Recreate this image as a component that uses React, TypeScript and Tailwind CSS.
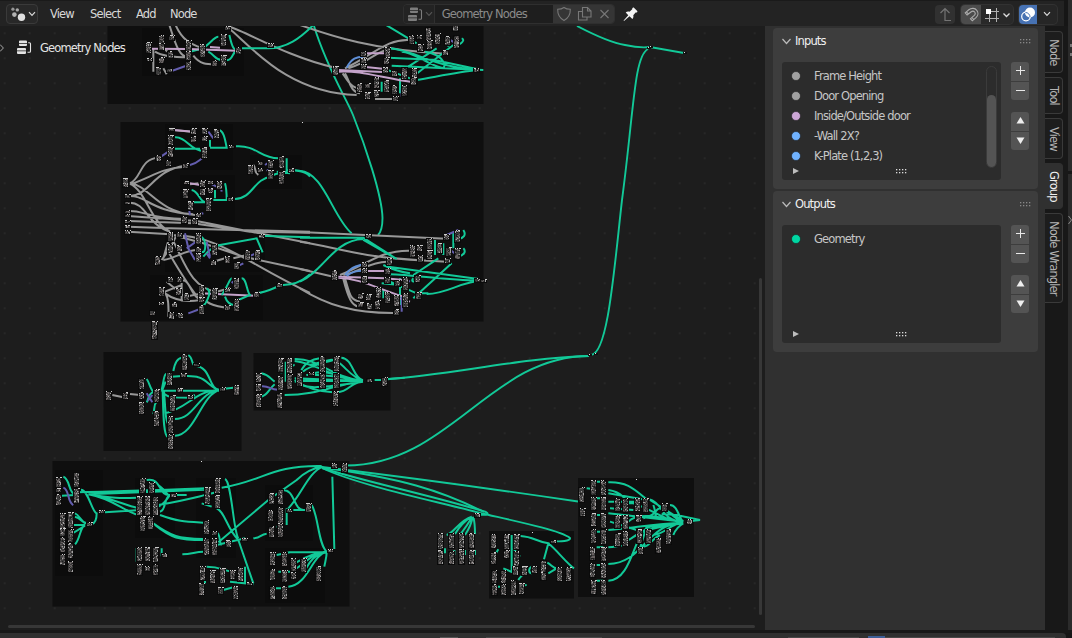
import React from 'react';

type Tone = 'geo' | 'val' | 'vec' | 'mat' | 'bool';
const TONES: Record<Tone, string> = {
  geo: '#12c998',
  val: '#989898',
  vec: '#635dae',
  mat: '#c3a2c9',
  bool: '#5f8fd6',
};

type ClusterData = {
  x: number;
  y: number;
  links: [Tone, string][];
  // each node: centre x, top y, height
  nodes: string;
};

// Clusters are stored on a grid three times finer than the screen.
const CLUSTERS: ClusterData[] = [
  {
    x: 100,
    y: 25,
    links: [
      ['val', 'M208 0C225 50 235 95 265 97M225 -4C245 45 275 60 305 68M390 6C440 20 560 95 705 128M385 8C450 60 560 205 770 210M600 0C700 35 820 75 1035 86M160 70V140M165 80C180 90 210 97 265 97M280 92C300 118 320 118 345 118M190 70L215 90M735 130C820 90 860 40 930 45M745 130C800 115 830 80 860 75M735 145C750 170 750 200 780 205M728 145C745 170 755 190 780 190M825 222H885M190 130L200 148'],
      ['geo', 'M300 75C330 60 340 35 355 35M325 80C345 90 345 105 365 105M388 30C395 60 400 80 415 72C395 80 400 110 375 105M420 70H505C560 70 600 40 640 0M850 -5L950 55M925 125L1010 70M945 150L1060 60M975 80C1040 90 1040 135 1025 128C985 120 940 80 905 80M870 70C960 80 1000 130 1150 135M865 98L1000 104L1130 132M875 122L1130 134M950 165C1010 155 1080 140 1130 136M850 130L930 160M1085 40C1100 45 1075 65 1062 60M1015 25V55M1045 35V65M270 80L310 70M845 170V200M900 160V205M1005 30V55'],
      ['mat', 'M155 71L265 72L410 77M330 66L360 68M715 135L865 142M715 140C780 135 850 160 940 172M790 85L855 85M790 125L855 132'],
      ['bool', 'M740 128C755 100 770 95 790 95'],
      ['vec', 'M215 138L265 120M360 45L380 60M1068 40V70M905 190V215M1050 45L1078 60'],
    ],
    nodes:
      '145,50,32 148,98,10 185,30,26 185,55,22 185,95,18 214,30,16 212,78,20 177,125,24 208,130,12 266,45,36 266,78,28 266,108,28 308,58,38 372,28,36 372,90,34 345,105,18 415,65,20 383,2,12 512,55,12 707,122,28 790,78,14 790,98,14 790,118,14 862,66,32 860,95,22 858,125,18 915,125,36 945,130,48 885,135,18 935,30,26 960,30,12 985,5,38 962,58,20 988,45,26 1013,25,34 1043,32,26 1070,30,40 1067,-2,20 1037,75,16 1130,128,12 778,175,28 803,175,16 804,200,20 830,155,34 830,195,22 860,165,36 885,180,26 913,180,34 886,214,14 940,155,24',
  },
  {
    x: 110,
    y: 115,
    links: [
      ['val', 'M60 205C95 190 90 130 145 128M60 208C120 190 150 160 225 155M60 243C120 240 130 165 225 152M60 203C120 215 140 290 255 300M60 206C110 230 120 320 180 350M55 243C110 240 120 290 250 298M55 263C110 260 110 330 180 350M55 288C100 285 110 310 225 312M55 303L260 318L600 385M55 318L250 325L420 350L600 353M55 335L180 340L600 350M55 350L180 358L280 385L400 425L600 468M190 45L245 50M180 360C330 360 400 440 600 534M200 360L180 400L155 435M160 430L180 360M160 435C200 430 220 405 265 405M170 400C190 440 240 520 270 555M185 370C220 430 240 520 320 530C340 525 350 522 360 520M290 560C310 575 330 575 350 578M160 530C180 540 175 600 175 605M165 530L215 510M165 535C200 560 240 560 270 555M170 500L225 545L280 535M205 500C240 480 240 540 265 550M430 150C440 160 430 170 445 180M310 440L345 430M370 430L410 420M215 490V560M200 600L215 605M265 205L240 208'],
      ['mat', 'M270 535L435 542M240 205L270 210M190 45L250 50'],
      ['geo', 'M195 67C230 65 240 108 285 108M195 101H270M300 98H350C345 70 340 45 325 45M300 95V75M378 94C440 90 450 130 505 130M530 130V170C520 175 500 175 490 180M530 165C570 165 590 170 600 185M375 252C430 250 430 190 485 185M245 225C270 230 265 265 300 265M310 255H350C350 225 348 215 345 205M315 250V225M250 262L290 262M275 410C290 420 290 365 270 365M280 425C300 400 315 395 330 390L440 370L458 412M445 362L600 367M290 520C310 530 285 575 270 580M335 540C350 520 360 490 365 490M345 545C350 560 360 570 375 570M395 490C410 490 410 530 420 540L385 555M440 535C480 530 500 512 520 510C570 510 590 485 600 478M500 170L540 175'],
      ['vec', 'M145 130L175 110M240 150C265 145 270 130 285 125M225 355L235 400L255 435M230 400L265 375M290 380L300 425M295 50L310 70M330 200L335 230M235 270L240 300M235 595L270 582M365 500L385 515M380 455L400 445M415 425L450 410M465 150L480 140M470 165L490 175M300 205L320 215M280 295L260 300M290 415L300 430'],
    ],
    nodes:
      '185,40,10 183,60,30 183,95,30 175,135,18 147,120,18 250,38,18 250,64,18 285,38,18 285,62,16 320,42,26 285,95,34 365,90,10 228,145,14 47,190,28 54,238,12 54,258,10 54,284,10 54,298,10 54,314,10 54,330,10 54,346,12 422,150,26 452,138,12 452,160,12 483,134,24 483,165,26 515,122,36 515,168,38 545,160,12 230,198,8 228,222,28 278,195,22 278,220,20 303,195,12 303,220,14 330,198,24 296,248,38 362,246,12 242,258,26 225,302,22 255,308,18 265,294,12 183,350,28 183,388,26 210,350,16 210,390,18 265,355,32 265,395,14 265,415,28 314,388,34 310,435,14 352,422,20 380,440,20 413,405,30 442,405,30 455,358,12 143,424,28 183,485,16 210,487,16 156,516,28 205,518,22 230,535,22 195,560,16 155,562,10 275,510,38 276,545,14 275,570,28 315,520,36 352,518,12 380,488,34 352,570,14 380,552,36 185,590,20 212,594,14 440,530,14 508,505,12 128,585,14 135,618,54',
  },
  {
    x: 300,
    y: 115,
    links: [
      ['val', 'M0 351L440 371M0 380C100 395 180 425 330 434L440 440M0 462L100 485M0 520C80 570 160 595 285 594M120 480C200 450 240 405 330 407M130 480C180 470 210 440 260 440M135 490C150 540 150 555 180 560M130 492C145 550 155 570 175 575M285 430L350 435'],
      ['geo', 'M0 168C70 170 100 310 155 355M0 368H190L290 432M0 500C70 470 100 375 190 372M190 375L290 432M340 480L415 430M340 550L455 445M490 345C500 360 490 370 475 372M490 400C500 410 490 422 475 425M265 455L535 492M270 478C340 480 440 495 535 497M380 537C440 538 480 500 550 496M270 500L350 535H385M340 490C330 500 345 505 350 490M405 375V420M430 385V420M250 525V550M300 490V570M460 400V350M250 450C270 460 290 470 330 475M245 505L300 510'],
      ['mat', 'M115 485L255 490L310 495M115 488C180 490 230 520 310 545M195 468L255 468M290 548L330 560'],
      ['bool', 'M135 480C155 455 165 455 190 448M140 483C160 468 170 468 190 467'],
      ['vec', 'M305 545V590M440 360L475 345M465 350V375M465 405V430M310 490L330 500M445 400L470 420'],
    ],
    nodes:
      '104,464,30 193,440,16 193,460,14 193,482,20 268,430,20 263,458,18 263,485,18 205,358,12 338,390,36 360,390,18 388,370,34 390,405,28 362,420,20 418,385,30 447,395,28 440,358,18 472,345,36 472,398,34 443,430,14 318,485,38 292,495,18 352,480,22 355,532,20 182,535,18 205,537,18 182,560,14 208,565,18 235,515,32 233,555,26 263,530,34 290,540,32 318,535,42 290,582,18 534,490,12 551,492,8',
  },
  {
    x: 95,
    y: 345,
    links: [
      ['val', 'M52 150L92 158M105 147L135 150'],
      ['geo', 'M155 102C165 115 165 135 178 142M155 172C160 165 160 145 175 142M175 208C180 190 175 180 185 170M200 135C210 90 205 85 225 85M235 78C240 50 250 38 262 38M280 30C295 40 290 62 300 62C350 65 340 135 375 135M230 95C260 92 300 92 310 97C340 105 345 130 375 135M200 137H375M205 145C220 158 230 158 285 158M375 135C300 135 280 190 210 205M375 135C310 140 300 222 240 222M375 135C320 145 300 272 240 272M203 140C205 200 205 272 218 275M207 140C212 190 210 220 218 235M200 140L212 110M375 133L415 128M290 155L300 150'],
      ['vec', 'M155 145L172 172M158 168L172 150'],
    ],
    nodes:
      '41,137,28 92,140,20 141,98,34 139,140,20 140,170,36 184,132,40 185,198,46 268,26,48 225,82,38 305,55,10 267,84,12 254,130,12 288,150,12 234,150,48 227,212,52 227,268,46 383,126,12 426,120,30',
  },
  {
    x: 253,
    y: 345,
    links: [
      ['geo', 'M25 85C50 90 50 100 65 110M25 155C45 150 45 135 65 118M85 85V50M98 110V50M125 42C200 40 230 95 330 108M125 48C210 60 240 105 330 108M125 100L330 108M125 110C200 100 250 110 330 110M95 150C200 150 250 115 330 110M145 75C160 50 180 42 200 40M150 80C170 60 230 50 240 45M160 90C200 85 260 95 330 108M230 45C260 35 290 100 330 106M265 38C300 40 300 100 330 106M125 105C160 130 200 140 240 142C290 145 290 110 330 110M145 120C170 130 190 130 330 110M180 85C240 70 270 110 330 108M145 108H330M365 105H385M405 103C420 100 440 100 455 98M100 90C110 70 115 60 125 60M170 60L230 45'],
      ['vec', 'M25 124C50 122 50 134 75 134'],
    ],
    nodes:
      '16,84,28 16,118,20 16,148,40 83,40,42 83,92,42 81,145,44 110,38,46 110,88,46 140,80,42 208,32,48 208,85,44 250,32,46 250,84,44 248,138,44 175,82,8 350,98,12 395,95,28',
  },
  {
    x: 45,
    y: 455,
    links: [
      ['geo', 'M55 65C75 70 70 115 90 118M50 122L90 120M108 104C130 105 140 170 155 175C155 190 150 205 140 208M92 112C200 110 350 105 480 100M130 118L480 104M130 118C200 130 230 130 275 128M130 118C200 130 240 150 275 158M130 118C200 130 240 170 280 180M180 172L275 166M530 98C650 80 680 30 830 33M340 150C450 130 520 110 480 118M345 180C400 200 420 200 475 203M325 205C380 245 400 250 475 252M330 210C380 250 400 255 475 255M305 75C350 65 340 125 375 120C365 135 350 150 340 155M345 170C365 165 355 130 375 120H425M340 90C355 100 360 110 370 120M412 298C440 298 450 290 475 290M540 72C560 80 565 230 580 250M515 160C540 170 545 220 580 255L625 385M520 262L670 135L755 75C780 50 800 40 830 35M515 270L600 250M505 232C530 225 520 265 530 270M625 250C650 248 645 238 665 236M710 105C750 100 745 165 775 165M745 165H790M730 160C770 120 790 50 835 35M800 150C820 180 820 270 845 290C845 310 840 320 838 335M862 65L868 282M730 292H845C800 300 790 330 780 345M845 290C800 290 770 340 735 350M845 290C800 300 790 390 730 395M845 290C790 295 760 320 750 325M725 160V210M700 350H735M690 400H715M695 300L735 292M695 215H715M90 175C105 180 105 200 125 205M90 185C110 190 110 205 125 205M85 210L120 210C105 215 105 255 90 268M75 240L120 212M275 280V320M350 280V300L365 298M485 335C530 335 525 345 560 350M600 335V385H620M480 385V350M555 380L625 388M535 405L570 395M470 145L500 155M480 120L520 110'],
      ['vec', 'M55 98C75 105 65 140 85 150'],
    ],
    nodes:
      '41,65,30 41,98,12 41,118,34 94,52,44 94,98,46 52,175,46 52,220,24 54,245,46 54,298,34 78,172,48 78,222,40 78,265,44 78,318,34 170,166,10 133,200,12 293,70,44 319,80,34 283,122,56 307,122,56 331,122,56 293,182,46 318,182,40 385,115,12 285,276,42 309,276,42 333,276,44 285,328,34 308,332,14 333,328,34 360,294,12 488,95,52 518,68,46 518,120,40 484,195,42 484,248,50 508,248,50 508,228,12 551,255,22 600,250,8 473,332,42 502,345,38 470,385,36 533,338,46 527,395,22 562,345,28 587,335,42 572,392,40 613,380,10 680,115,32 708,102,46 678,165,32 708,155,50 680,213,34 708,205,42 735,162,10 790,145,28 683,292,40 683,342,34 683,392,38 718,292,42 718,345,36 718,392,40 745,308,38 745,352,22 775,308,42 822,332,46 858,282,10 870,25,16 898,25,28',
  },
  {
    x: 420,
    y: 460,
    links: [
      ['geo', 'M155 170C120 180 100 220 80 225M155 170C130 185 115 205 105 222M157 170C145 190 135 205 122 222M158 170C155 190 145 210 135 225M160 170C165 190 165 205 165 222M75 265V280M103 270V285M135 270V285M165 270V285M275 225V335M280 265L300 290M302 228C340 230 350 245 385 250L372 298M385 250C410 270 440 310 462 325M382 308C395 315 400 325 410 325M235 268L225 285M250 325L285 340M295 360C300 350 310 345 315 335M335 320C325 325 325 340 335 340M385 340L410 325M230 380H260M295 378L320 375'],
      ['geo', 'M500 85L525 88M530 65H550M530 115H550M530 165H550M530 215H550M530 262H550M530 315H550M530 362H550M565 67C620 65 640 85 680 118M565 100L680 120M565 90C600 95 605 108 615 115M565 125H650M565 160L790 185M565 210C640 205 700 190 790 188M565 262C590 262 590 255 605 258M565 312C670 310 680 190 790 188M565 362C640 360 640 210 690 200L790 190M625 130L640 130C700 150 740 185 790 187M690 118C730 130 720 180 790 186M750 135C770 135 775 165 785 180M740 155C760 165 770 182 790 186M700 225C740 220 750 190 790 190M760 225C765 210 780 195 790 190M625 185C650 160 700 165 790 187M625 240C650 230 640 210 790 190M670 175C720 160 700 150 720 145M690 120L790 183M680 200L655 280M700 135C710 160 700 170 720 178M815 183L840 180L770 165L725 162M670 260C690 260 690 240 720 225M570 145L640 150M570 185L650 210'],
    ],
    nodes:
      '61,218,48 61,270,42 95,220,44 95,272,40 125,220,44 125,268,44 155,220,44 155,270,42 172,160,12 221,222,42 221,275,36 260,222,46 260,270,24 289,222,46 289,272,44 400,240,10 224,330,40 250,330,38 224,372,34 250,372,34 288,318,26 314,318,26 343,318,22 370,300,36 370,335,24 281,360,44 306,370,34 418,320,42 446,320,42 486,82,44 488,145,24 521,60,44 521,112,40 521,158,40 521,208,42 517,262,40 519,310,42 521,360,42 551,60,46 551,112,40 551,160,46 551,208,46 551,262,42 551,310,46 551,360,44 593,115,40 616,115,42 593,165,40 616,165,42 593,218,38 616,212,46 653,115,40 677,115,42 655,165,22 659,208,42 685,208,42 662,262,22 715,235,44 745,208,44 735,130,24 808,178,14',
  },
];

const FRAMES = [
  [107.5, 20, 376, 84],
  [120.5, 122, 363, 199.5],
  [103.5, 352, 138, 99],
  [253.5, 353, 137, 57.5],
  [52.5, 461, 297, 145.5],
  [489, 531, 85, 67.5],
  [578, 478, 116, 119],
];

const SUBFRAMES = [
  [142, 28, 102, 48],
  [165, 124, 68, 46],
  [250, 155, 52, 34],
  [180, 175, 55, 50],
  [150, 275, 113, 45],
  [165, 230, 100, 42],
  [55, 470, 48, 106],
  [135, 478, 40, 60],
  [196, 478, 40, 80],
  [265, 485, 48, 56],
  [265, 548, 60, 55],
];

const TRUNKS = [
  'M314 26C327 68 345 96 353 115C365 145 382 195 382.5 218C382.5 227 381 232 378 235',
  'M577 26C598 37 612 43 625 45C634 47 642 48 650 47L684 53',
  'M648 49C634 56 634 110 622 200C614 270 608 354 591 355',
  'M589 356C520 358 450 375 388 379',
  'M589 356C490 356 450 465 346 465.5',
  'M322 467C380 474 500 490 578 501.5',
  'M322 468C370 483 430 495 486 512C490 514 486 516 478 514',
  'M322 468C360 486 440 502 480 513C510 520 560 530 570 538C571 541 560 542 553 541',
  'M324 468C400 478 440 490 484 512',
];

const GridDots = () => (
  <pattern id="dots" x="3.7" y="7.3" width="25" height="25" patternUnits="userSpaceOnUse">
    <rect width="2" height="2" fill="#272727" />
  </pattern>
);

const snap = (v: number) => Math.round(v / 3) * 3;

// Stable 0..1 value for a grid cell, so every node keeps its own texture.
const cell = (a: number, b: number) => {
  const v = Math.sin(a * 12.9898 + b * 78.233) * 43758.5453;
  return v - Math.floor(v);
};

const NodeBox = ({ x, y, h }: { x: number; y: number; h: number }) => {
  const left = snap(x - 8);
  const top = snap(y);
  const height = snap(h);
  let bright = '';
  let soft = '';
  let dark = '';
  for (let r = 3; r < height; r += 3) {
    for (let c = 0; c < 5; c += 1) {
      const v = cell(left + c * 7, top + r);
      const px = `M${left + c * 3} ${top + r + 1.5}h3`;
      const limit = c === 4 ? 0.3 : c === 0 ? 0.1 : 0.06;
      if (v < limit) bright += px;
      else if (v < limit + (c === 0 || c === 4 ? 0.15 : 0.34)) soft += px;
      else if (v > 0.85) dark += px;
    }
  }
  let header = '';
  for (let c = 0; c < 6; c += 1) {
    if (cell(left + c, top * 3) < 0.44) header += `M${left + c * 3} ${top + 1.5}h3`;
  }
  return (
    <g strokeWidth="3">
      <rect x={left - 3} y={top} width="21" height={height + 3} fill="#0a0a0a" />
      <rect x={left} y={top + 3} width="15" height={height - 3} fill="#3c3c3c" />
      <path d={dark} stroke="#1e1e1e" />
      <path d={soft} stroke="#696363" />
      <path d={bright} stroke="#a8a8a8" />
      <path d={header} stroke="#d4d4d4" />
    </g>
  );
};

const Cluster = ({ data }: { data: ClusterData }) => (
  <g transform={`translate(${data.x} ${data.y}) scale(0.33333)`}>
    {data.links.map(([tone, d], i) => (
      <path key={i} d={d} stroke={TONES[tone]} strokeWidth="6" fill="none" />
    ))}
    {data.nodes.split(' ').map((n, i) => {
      const [x, y, h] = n.split(',').map(Number);
      return <NodeBox key={i} x={x} y={y} h={h} />;
    })}
  </g>
);

const SMALL_NODES = [
  [302, 122], [201, 461], [636, 479], [532, 532], [650, 46], [684, 52], [589, 354], [595, 353], [648, 47],
];

const NodeCanvas = () => (
  <svg className="block h-[604px] w-[765px]" viewBox="0 26 765 604">
    <defs>
      <GridDots />
    </defs>
    <rect y="26" width="765" height="604" fill="#1d1d1d" />
    <rect y="26" width="757" height="597" fill="url(#dots)" />
    {FRAMES.map(([x, y, w, h]) => (
      <rect key={`${x}-${y}`} x={x} y={y} width={w} height={h} fill="#0f0f0f" />
    ))}
    {SUBFRAMES.map(([x, y, w, h]) => (
      <rect key={`${x}-${y}`} x={x} y={y} width={w} height={h} fill="#0c0c0c" />
    ))}
    {TRUNKS.map((d) => (
      <path key={d} d={d} stroke={TONES.geo} strokeWidth="1.9" fill="none" />
    ))}
    {CLUSTERS.map((c, i) => (
      <Cluster key={i} data={c} />
    ))}
    {SMALL_NODES.map(([x, y], i) => (
      <g key={i}>
        <rect x={x - 1} y={y} width="4" height="2" fill="#111" />
        <rect x={x} y={y} width="1" height="1" fill="#ddd" />
      </g>
    ))}
    <rect x="8" y="625" width="747" height="3" rx="1.5" fill="#373737" />
    <rect x="759" y="278" width="3" height="337" rx="1.5" fill="#373737" />
  </svg>
);

const Chevron = ({ className = '' }: { className?: string }) => (
  <svg className={`h-[6px] w-[8px] shrink-0 ${className}`} viewBox="0 0 8 6">
    <path d="M1 1.2L4 4.4L7 1.2" fill="none" stroke="currentColor" strokeWidth="1.2" />
  </svg>
);

const TreeIcon = ({ className = '' }: { className?: string }) => (
  <svg className={`h-[15px] w-[15px] shrink-0 ${className}`} viewBox="0 0 15 15">
    <path d="M3 .5h6a1 1 0 0 1 1 1v1.700H2V1.500a1 1 0 0 1 1-1zM2 4h8v.9a1 1 0 0 1-1 1H3a1 1 0 0 1-1-1zM1 8h7a1 1 0 0 1 1 1v1.400H0V9a1 1 0 0 1 1-1zM0 11.300h9v1.700a1 1 0 0 1-1 1H1a1 1 0 0 1-1-1z" fill="currentColor" />
    <path d="M11.200 2.700h1.300a1 1 0 0 1 1 1v7.500a1 1 0 0 1-1 1H10.500" fill="none" stroke="currentColor" strokeWidth="1.100" />
  </svg>
);

const EditorIcon = () => (
  <svg className="h-[15px] w-[15px] shrink-0" viewBox="0 0 15 15" fill="#e0e0e0">
    <circle cx="1.900" cy="2.200" r="1.600" opacity=".6" />
    <circle cx="6.300" cy="2.900" r="1.700" opacity=".7" />
    <circle cx="3.400" cy="7.600" r="2.300" opacity=".75" />
    <circle cx="10.500" cy="10.300" r="3.700" />
  </svg>
);

const TopBar = () => (
  <header className="flex h-[26px] w-[1064px] items-center border-t border-[#1a1a1a] bg-[#232323] pb-px pl-[6px] text-[#d8d8d8]">
    <div className="mt-[2px] flex h-[20px] w-[32px] items-center gap-[2px] rounded-[4px] border border-[#3a3a3a] bg-[#282828] pl-[4px]">
      <EditorIcon />
      <Chevron />
    </div>
    <nav className="mt-[2px] flex">
      <span className="ml-[12px] w-[40px]">View</span>
      <span className="w-[46px]">Select</span>
      <span className="w-[34px]">Add</span>
      <span className="w-[233px]">Node</span>
    </nav>
    <div className="mt-[2px] flex h-[20px] w-[212px] overflow-hidden rounded-[4px] border border-[#2f2f2f] text-[#8a8a8a]">
      <div className="flex w-[31px] items-center gap-[2px] border-r border-[#303030] bg-[#232323] pl-[4px] text-[#7d7d7d]">
        <TreeIcon />
        <Chevron className="text-[#555]" />
      </div>
      <div className="flex w-[119px] items-center bg-[#1e1e1e] pl-[7px]">Geometry Nodes</div>
      <div className="flex flex-1 items-center bg-[#353535]">
        <svg className="h-[18px] w-[61px]" viewBox="0 0 61 18" fill="none" stroke="#777" strokeWidth="1.100">
          <path d="M11 2.500C13 4 15 4.300 17.300 4.300C17.500 9.500 15.500 13 11 15.500C6.500 13 4.500 9.500 4.700 4.300C7 4.300 9 4 11 2.500Z" />
          <path d="M29.500 2.500h5l3.500 3.500v6h-8.500zM34.500 2.500v3.500h3.500M29.500 6.500h-4v8.500h8.500v-3" />
          <path d="M47.500 5l8 8M55.500 5l-8 8" />
        </svg>
      </div>
    </div>
    <svg className="ml-[8px] mt-[2px] h-[15px] w-[15px]" viewBox="0 0 15 15" fill="#f4f4f4">
      <path d="M9.300 1.200C9.800.3 10.600.3 11.200.9L14 3.700C14.700 4.400 14.500 5.200 13.600 5.500L12.600 5.600L10.300 8.200C10.700 9.600 10.300 11 9.400 12L6.500 9.300L1 14L.6 13.600L5.300 8.200L2.700 5.400C3.700 4.500 5.100 4.300 6.500 4.700L9.200 2.300Z" />
    </svg>
    <div className="ml-auto mr-[7px] mt-[2px] flex">
      <div className="mr-[6px] flex h-[19px] w-[20px] items-center justify-center rounded-[4px] bg-[#313131]">
        <svg className="h-[15px] w-[13px]" viewBox="0 0 13 15" fill="none" stroke="#747474" strokeWidth="1.200">
          <path d="M12 13.500H6V1.500M1.500 6L6 1.500L10.500 6" />
        </svg>
      </div>
      <div className="flex h-[19px] w-[52px] overflow-hidden rounded-[4px] bg-[#292929] ring-1 ring-[#323232]">
        <div className="flex w-[20px] items-center justify-center bg-[#4c4c4c]">
          <svg className="h-[15px] w-[15px]" viewBox="0 0 15 15" fill="none" stroke="#adadad" strokeWidth="1.100">
            <path d="M1.200 5.800L4.800 2.800C7.500.7 11 1 12.800 3.300C14.500 5.600 14.200 8.800 12 10.700L8.300 13.800L6.500 11.700L10 8.700C11.300 7.500 11.500 6 10.600 5C9.700 4 8.200 4 6.900 5L3.100 8ZM4.300 7L2.500 4.800M9.700 12.500L7.900 10.300" />
          </svg>
        </div>
        <svg className="h-[19px] w-[32px]" viewBox="0 0 32 19" fill="none" stroke="#b0b0b0" strokeWidth="1">
          <path d="M8.500 8v9M15.500 3v14M4 13.500h14M10 6.500h8" />
          <rect x="5" y="4" width="5" height="5" fill="#fff" stroke="none" />
          <path d="M22.500 8.500L25.500 11.500L28.500 8.500" stroke="#ddd" strokeWidth="1.300" />
        </svg>
      </div>
      <div className="ml-[6px] flex h-[19px] w-[38px] items-center overflow-hidden rounded-[4px] bg-[#262626] ring-1 ring-[#323232]">
        <svg className="h-[19px] w-[18px] shrink-0 bg-[#4772b3]" viewBox="0 0 18 19">
          <circle cx="11" cy="7.500" r="5" fill="#fff" />
          <circle cx="7" cy="11.500" r="4.300" fill="none" stroke="#fff" strokeWidth="1.200" />
          <path d="M6.500 7.500A4.500 4.500 0 0 1 11 12" fill="none" stroke="#4772b3" strokeWidth="1" />
        </svg>
        <Chevron className="ml-[6px]" />
      </div>
    </div>
  </header>
);

const Grip = ({ className = '' }: { className?: string }) => (
  <svg className={`h-[5px] w-[11px] ${className}`} viewBox="0 0 11 5" fill="currentColor">
    {[0, 3, 6, 9].map((x) => (
      <g key={x}>
        <rect x={x} width="1.300" height="1.300" />
        <rect x={x} y="3" width="1.300" height="1.300" />
      </g>
    ))}
  </svg>
);

const ButtonPair = ({ paths, solid }: { paths: string[]; solid?: boolean }) => (
  <div className="flex flex-col gap-px overflow-hidden rounded-[3px]">
    {paths.map((d) => (
      <button key={d} className="flex h-[18.500px] w-[18px] items-center justify-center bg-[#545454] pb-[1.500px]">
        <svg className="h-[11px] w-[11px]" viewBox="0 0 11 11">
          <path d={d} fill={solid ? '#eee' : 'none'} stroke={solid ? 'none' : '#e8e8e8'} strokeWidth="1" />
        </svg>
      </button>
    ))}
  </div>
);

type Socket = { name: string; dot: string };

const SocketPanel = ({ title, items, scroll }: { title: string; items: Socket[]; scroll?: boolean }) => (
  <section className="h-[161px] w-[265px] rounded-[4px] bg-[#3d3d3d] px-[9px] pt-[5px]">
    <div className="flex h-[16px] items-center text-[#f0f0f0]">
      <svg className="mr-[4px] h-[7px] w-[9px]" viewBox="0 0 9 7">
        <path d="M.5 1L4.500 5.500L8.500 1" fill="none" stroke="#bbb" strokeWidth="1.200" />
      </svg>
      <span>{title}</span>
      <Grip className="ml-auto mr-[-2px] text-[#888]" />
    </div>
    <div className="mt-[13px] flex items-start">
      <div className="flex h-[118px] w-[219px] flex-col rounded-[3px] bg-[#2c2c2c]">
        <div className="flex h-[106px] justify-between pt-[4px]">
          <ul>
            {items.map((s) => (
              <li key={s.name} className="flex h-[20px] items-center text-[#c6c6c6]">
                <svg className="ml-[9px] mr-[13px] h-[10px] w-[10px]" viewBox="0 0 10 10">
                  <circle cx="5" cy="5" r="4.500" fill={s.dot} stroke="#1b1b1b" strokeWidth=".6" />
                </svg>
                {s.name}
              </li>
            ))}
          </ul>
          {scroll && (
            <div className="mr-[4px] flex h-[102px] w-[11px] flex-col justify-end rounded-full border border-[#3b3b3b]">
              <div className="h-[72px] rounded-full bg-[#545454]" />
            </div>
          )}
        </div>
        <div className="flex items-center pl-[11px] text-[#dcdcdc]">
          <svg className="h-[6px] w-[6px]" viewBox="0 0 6 6">
            <path d="M0 0L6 3L0 6Z" fill="#bdbdbd" />
          </svg>
          <Grip className="ml-[97px]" />
        </div>
      </div>
      <div className="ml-[10px] flex flex-col gap-[12px]">
        <ButtonPair paths={['M5.500 1V10M1 5.500H10', 'M1 5.500H10']} />
        <ButtonPair solid paths={['M5.500 2L9.500 8.500H1.500Z', 'M5.500 9L9.500 2.500H1.500Z']} />
      </div>
    </div>
  </section>
);

const INPUTS: Socket[] = [
  { name: 'Frame Height', dot: '#a1a1a1' },
  { name: 'Door Opening', dot: '#a1a1a1' },
  { name: 'Inside/Outside door', dot: '#cca6d6' },
  { name: '-Wall 2X?', dot: '#70b2ff' },
  { name: 'K-Plate (1,2,3)', dot: '#70b2ff' },
];

const Tab = ({ label, size, active }: { label: string; size: string; active?: boolean }) => (
  <div
    className={`flex w-[18px] items-center justify-center rounded-r-[4px] border border-l-0 [writing-mode:vertical-rl] ${size} ${
      active ? 'border-[#303030] bg-[#303030] text-[#f0f0f0]' : 'border-[#3a3a3a] bg-[#1d1d1d] text-[#b4b4b4]'
    }`}
  >
    {label}
  </div>
);

export default function App() {
  return (
    <div className="flex h-[638px] w-[1072px] flex-col overflow-hidden whitespace-nowrap bg-[#161616] font-['DejaVu_Sans',sans-serif] text-[11.5px] leading-[14px] tracking-[-0.86px]">
      <div className="flex h-[630px]">
        <div className="flex w-[1068px] flex-col">
          <TopBar />
          <div className="flex h-[604px]">
            <main className="relative w-[765px]">
              <NodeCanvas />
              <div className="absolute left-0 top-[14px] flex items-center text-[#e4e4e4]">
                <svg className="mr-[13px] h-[8px] w-[4px]" viewBox="0 0 4 8">
                  <path d="M0 .5L3.400 4L0 7.500" fill="none" stroke="#aaa" strokeWidth="1" />
                </svg>
                <TreeIcon className="mr-[8px]" />
                Geometry Nodes
              </div>
            </main>
            <aside className="flex w-[280px] flex-col gap-[2px] bg-[#303030] pl-[8px] pt-[2px]">
              <SocketPanel title="Inputs" items={INPUTS} scroll />
              <SocketPanel title="Outputs" items={[{ name: 'Geometry', dot: '#00d6a3' }]} />
            </aside>
            <div className="flex w-[23px] flex-col gap-[4px] bg-[#181818] pt-[5px]">
              <Tab label="Node" size="h-[42px]" />
              <Tab label="Tool" size="h-[37px]" />
              <Tab label="View" size="h-[41px]" />
              <Tab label="Group" size="h-[46px]" active />
              <Tab label="Node Wrangler" size="h-[90px]" />
            </div>
          </div>
        </div>
        <div className="w-[4px] bg-[#2b2b2b]">
          <svg className="h-[300px] w-[4px]" viewBox="0 0 4 300">
            <path d="M2 44h2v3h-2zM2 53h2v3h-2z" fill="#777" />
            <path d="M0 171h4v3H0z" fill="#171717" />
            <path d="M.5 216L3.500 220L.5 224" fill="none" stroke="#888" />
          </svg>
        </div>
      </div>
      <div className="h-[3px] bg-[#181818]" />
      <footer className="flex h-[5px] w-[1066px] items-end rounded-tr-[4px] bg-[#303030]">
        <div className="ml-[440px] h-px w-[18px] bg-[#555]" />
        <div className="ml-[28px] h-px w-[116px] bg-[#484848]" />
        <div className="ml-[186px] h-px w-[71px] bg-[#484848]" />
        <div className="ml-[9px] h-[2px] w-[17px] bg-[#3d5f97]" />
        <div className="h-px w-[170px] bg-[#484848]" />
      </footer>
    </div>
  );
}
